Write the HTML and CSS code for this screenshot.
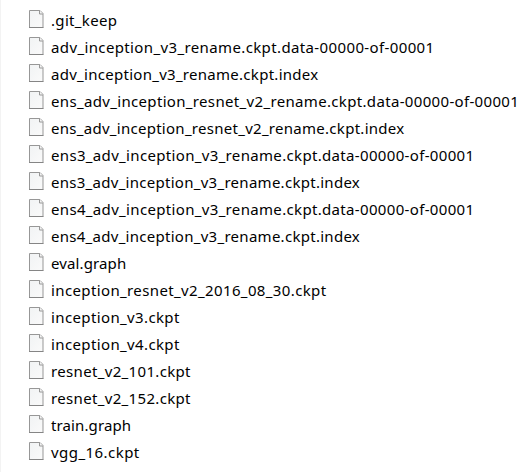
FILE: index.html
```html
<!DOCTYPE html>
<html lang="en">
<head>
<meta charset="utf-8">
<title>Files</title>
<link rel="stylesheet" href="styles.css">
</head>
<body>
<svg width="0" height="0" class="defs" aria-hidden="true">
  <defs>
    <linearGradient id="paper" x1="0" y1="0" x2="1" y2="1">
      <stop offset="0" stop-color="#f1f3f4"/>
      <stop offset="1" stop-color="#fafafa"/>
    </linearGradient>
    <symbol id="file" viewBox="0 0 15 18">
      <path d="M.5.5H11L14 3.5V17.5H.5Z" fill="url(#paper)" stroke="#979797"/>
      <path d="M10.5.5V4H14" fill="#f4f4f4" stroke="#979797"/>
      <path d="M0 17.5H14.5" stroke="#858585"/>
    </symbol>
  </defs>
</svg>
<ul class="files">
  <li class="file"><svg class="icon"><use href="#file"/></svg><span class="name">.git_keep</span></li>
  <li class="file"><svg class="icon"><use href="#file"/></svg><span class="name name--data">adv_inception_v3_rename.ckpt.data-00000-of-00001</span></li>
  <li class="file"><svg class="icon"><use href="#file"/></svg><span class="name name--index">adv_inception_v3_rename.ckpt.index</span></li>
  <li class="file"><svg class="icon"><use href="#file"/></svg><span class="name">ens_adv_inception_resnet_v2_rename.ckpt.data-00000-of-00001</span></li>
  <li class="file"><svg class="icon"><use href="#file"/></svg><span class="name name--index">ens_adv_inception_resnet_v2_rename.ckpt.index</span></li>
  <li class="file"><svg class="icon"><use href="#file"/></svg><span class="name">ens3_adv_inception_v3_rename.ckpt.data-00000-of-00001</span></li>
  <li class="file"><svg class="icon"><use href="#file"/></svg><span class="name name--index">ens3_adv_inception_v3_rename.ckpt.index</span></li>
  <li class="file"><svg class="icon"><use href="#file"/></svg><span class="name">ens4_adv_inception_v3_rename.ckpt.data-00000-of-00001</span></li>
  <li class="file"><svg class="icon"><use href="#file"/></svg><span class="name name--index">ens4_adv_inception_v3_rename.ckpt.index</span></li>
  <li class="file"><svg class="icon"><use href="#file"/></svg><span class="name name--graph">eval.graph</span></li>
  <li class="file"><svg class="icon"><use href="#file"/></svg><span class="name name--data">inception_resnet_v2_2016_08_30.ckpt</span></li>
  <li class="file"><svg class="icon"><use href="#file"/></svg><span class="name name--data">inception_v3.ckpt</span></li>
  <li class="file"><svg class="icon"><use href="#file"/></svg><span class="name name--data">inception_v4.ckpt</span></li>
  <li class="file"><svg class="icon"><use href="#file"/></svg><span class="name">resnet_v2_101.ckpt</span></li>
  <li class="file"><svg class="icon"><use href="#file"/></svg><span class="name">resnet_v2_152.ckpt</span></li>
  <li class="file"><svg class="icon"><use href="#file"/></svg><span class="name name--graph">train.graph</span></li>
  <li class="file"><svg class="icon"><use href="#file"/></svg><span class="name name--short">vgg_16.ckpt</span></li>
</ul>
</body>
</html>
```
FILE: styles.css
```css
body {
  margin: 0;
  background: #fff;
  color: #000;
  font: 15px/27px "Noto Sans", sans-serif;
}

.defs {
  display: block;
}

.files {
  box-sizing: border-box;
  height: 472px;
  margin: 0;
  padding: 7px 0 0 28px;
  border-left: 1px solid #f3f3f3;
  list-style: none;
  overflow: hidden;
}

.file {
  display: flex;
  align-items: flex-start;
  gap: 7px;
  height: 27px;
}

.icon {
  flex: none;
  width: 15px;
  height: 18px;
  margin-top: 3px;
}

.name {
  white-space: nowrap;
  letter-spacing: 0.335px;
}

.name--data {
  letter-spacing: 0.375px;
}

.name--index {
  letter-spacing: 0.28px;
}

.name--graph {
  letter-spacing: 0.12px;
}

.name--short {
  letter-spacing: 0.45px;
}
```
